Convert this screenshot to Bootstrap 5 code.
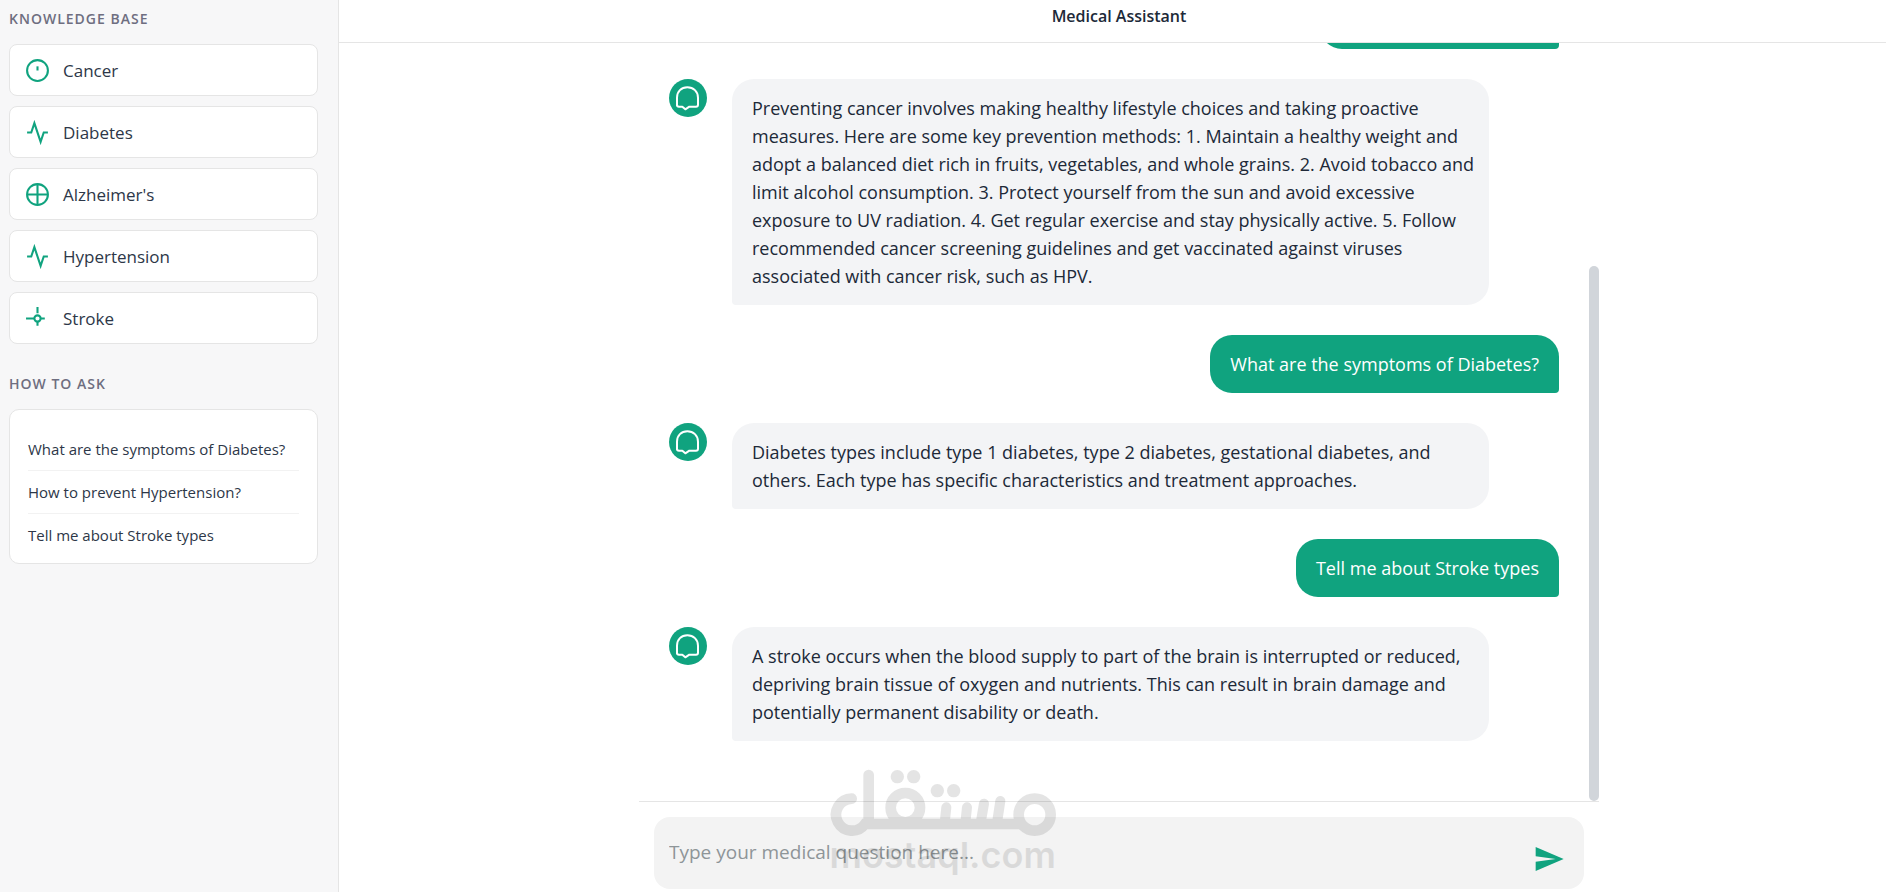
<!DOCTYPE html>
<html lang="en">
<head>
<meta charset="utf-8">
<meta name="viewport" content="width=device-width, initial-scale=1">
<title>Medical Assistant</title>
<link href="https://cdn.jsdelivr.net/npm/bootstrap@5.3.0/dist/css/bootstrap.min.css" rel="stylesheet">
<style>
  :root { --brand: #10a37f; --line: #e5e5e5; }
  body { font-family: "Open Sans", "Noto Sans", sans-serif; font-size: 18px; color: #202938; }
  .side-panel { width: 339px; background: #f7f7f8; border-right: 1px solid var(--line); padding: 9px 20px 0 9px; }
  .side-title { font-size: 14px; line-height: 20px; font-weight: 600; letter-spacing: 1px; color: #6e6e80; margin: 0 0 15px; text-transform: uppercase; }
  .topics { gap: 10px; }
  .topics + .side-title { margin-top: 30px; }
  .topic { height: 52px; border: 1px solid var(--line); border-radius: 8px; background: #fff; padding: 0 15px; gap: 13px; font-size: 17px; color: #2d3748; text-align: left; }
  .topic span { padding-top: 2px; }
  .topic svg { width: 25px; height: 25px; fill: none; stroke: var(--brand); stroke-width: 2; }
  .ask-card { border: 1px solid var(--line); border-radius: 10px; padding: 18px 18px 6px; }
  .ask-card a { display: block; height: 43px; padding-top: 10px; line-height: 22px; font-size: 15px; color: #2d3748; text-decoration: none; border-bottom: 1px solid #f2f2f2; white-space: nowrap; }
  .ask-card li:last-child a { border-bottom: 0; }
  .top-bar { height: 43px; border-bottom: 1px solid var(--line); padding: 0 0 8px 13px; }
  .top-bar h1 { font-size: 16px; font-weight: 600; }
  .chat-wrap { padding-left: 13px; }
  .chat-col { width: 100%; max-width: 960px; }
  .msg-list { padding: 0 30px 60px; gap: 30px; }
  .msg-list > * { flex-shrink: 0; }
  .avatar { width: 38px; height: 38px; margin-right: 25px; }
  .bubble { padding: 15px 20px; line-height: 28px; border-radius: 22px; }
  .bubble-bot { width: 85%; background: #f3f4f6; border-bottom-left-radius: 4px; padding-right: 6px; }
  .bubble-user { background: var(--brand); color: #fff; border-bottom-right-radius: 4px; min-width: 239px; min-height: 58px; }
  .bubble-fit { min-width: 0; }
  .scroll-track { width: 10px; }
  .scroll-thumb { background: #d1d5da; border-radius: 5px; }
  .composer { border-top: 1px solid var(--line); padding: 15px 15px 3px; }
  .composer-box { height: 72px; background: #f3f3f3; border-radius: 16px; padding: 0 19px 0 15px; }
  .composer-box input { border: 0; background: transparent; outline: 0; height: 72px; padding: 0 0 2px; font-size: 19px; }
  .composer-box input::placeholder { color: #8e9598; opacity: 1; }
  .send-btn { padding: 0; border: 0; background: transparent; line-height: 1; margin-bottom: 14px; }
  .brand-mark { bottom: 19px; width: 227px; opacity: .1; pointer-events: none; }
  .brand-mark span { font: 600 36px/36px Inter, sans-serif; color: #000; white-space: nowrap; }
  .brand-mark svg { display: block; }
</style>
</head>
<body>
<div class="d-flex vh-100 overflow-hidden position-relative">
  <aside class="side-panel flex-shrink-0">
    <h2 class="side-title">Knowledge Base</h2>
    <div class="d-grid topics">
      <button class="topic d-flex align-items-center" type="button"><svg viewBox="0 0 24 24"><circle cx="12" cy="12" r="10"/><path d="M12 8v4"/></svg><span>Cancer</span></button>
      <button class="topic d-flex align-items-center" type="button"><svg viewBox="0 0 24 24"><path d="M22 12h-4l-3 9L9 3l-3 9H2"/></svg><span>Diabetes</span></button>
      <button class="topic d-flex align-items-center" type="button"><svg viewBox="0 0 24 24"><circle cx="12" cy="12" r="10"/><path d="M12 2v20M2 12h20"/></svg><span>Alzheimer's</span></button>
      <button class="topic d-flex align-items-center" type="button"><svg viewBox="0 0 24 24"><path d="M22 12h-4l-3 9L9 3l-3 9H2"/></svg><span>Hypertension</span></button>
      <button class="topic d-flex align-items-center" type="button"><svg viewBox="0 0 24 24"><circle cx="12" cy="12" r="3"/><path d="M12 1v6M12 15v4M1 12h8M15 12h4"/></svg><span>Stroke</span></button>
    </div>
    <h2 class="side-title">How to Ask</h2>
    <ul class="ask-card bg-white list-unstyled mb-0">
      <li><a href="#">What are the symptoms of Diabetes?</a></li>
      <li><a href="#">How to prevent Hypertension?</a></li>
      <li><a href="#">Tell me about Stroke types</a></li>
    </ul>
  </aside>

  <main class="flex-grow-1 d-flex flex-column">
    <header class="top-bar d-flex align-items-center justify-content-center flex-shrink-0">
      <h1 class="mb-0">Medical Assistant</h1>
    </header>
    <div class="chat-wrap flex-grow-1 d-flex justify-content-center overflow-hidden">
      <div class="chat-col d-flex flex-column">
        <div class="flex-grow-1 d-flex overflow-hidden">
          <div class="msg-list flex-grow-1 d-flex flex-column justify-content-end">
            <div class="bubble bubble-user align-self-end"></div>
            <div class="d-flex align-items-start">
              <svg class="avatar flex-shrink-0" viewBox="87 233 114 114"><circle cx="144" cy="290" r="57" fill="#10a37f"/><path d="M111 313V289C111 270 124 258 142 258S174 270 174 289V310Q174 316 168 316H148L136 324L127 316H117Q111 316 111 310Z" fill="none" stroke="#fff" stroke-width="6" stroke-linejoin="round"/></svg>
              <div class="bubble bubble-bot">Preventing cancer involves making healthy lifestyle choices and taking proactive measures. Here are some key prevention methods: 1. Maintain a healthy weight and adopt a balanced diet rich in fruits, vegetables, and whole grains. 2. Avoid tobacco and limit alcohol consumption. 3. Protect yourself from the sun and avoid excessive exposure to UV radiation. 4. Get regular exercise and stay physically active. 5. Follow recommended cancer screening guidelines and get vaccinated against viruses associated with cancer risk, such as HPV.</div>
            </div>
            <div class="bubble bubble-user bubble-fit align-self-end">What are the symptoms of Diabetes?</div>
            <div class="d-flex align-items-start">
              <svg class="avatar flex-shrink-0" viewBox="87 233 114 114"><circle cx="144" cy="290" r="57" fill="#10a37f"/><path d="M111 313V289C111 270 124 258 142 258S174 270 174 289V310Q174 316 168 316H148L136 324L127 316H117Q111 316 111 310Z" fill="none" stroke="#fff" stroke-width="6" stroke-linejoin="round"/></svg>
              <div class="bubble bubble-bot">Diabetes types include type 1 diabetes, type 2 diabetes, gestational diabetes, and others. Each type has specific characteristics and treatment approaches.</div>
            </div>
            <div class="bubble bubble-user bubble-fit align-self-end">Tell me about Stroke types</div>
            <div class="d-flex align-items-start">
              <svg class="avatar flex-shrink-0" viewBox="87 233 114 114"><circle cx="144" cy="290" r="57" fill="#10a37f"/><path d="M111 313V289C111 270 124 258 142 258S174 270 174 289V310Q174 316 168 316H148L136 324L127 316H117Q111 316 111 310Z" fill="none" stroke="#fff" stroke-width="6" stroke-linejoin="round"/></svg>
              <div class="bubble bubble-bot">A stroke occurs when the blood supply to part of the brain is interrupted or reduced, depriving brain tissue of oxygen and nutrients. This can result in brain damage and potentially permanent disability or death.</div>
            </div>
          </div>
          <div class="scroll-track d-flex flex-column justify-content-end flex-shrink-0">
            <div class="scroll-thumb" style="height:70.6%"></div>
          </div>
        </div>
        <form class="composer flex-shrink-0">
          <div class="composer-box d-flex align-items-end">
            <input class="flex-grow-1" type="text" aria-label="Medical question" placeholder="Type your medical question here...">
            <button class="send-btn" type="button" aria-label="Send"><svg width="32" height="32" viewBox="0 0 24 24" fill="#10a37f"><path d="M2 21L23 12 2 3v7l15 2-15 2z"/></svg></button>
          </div>
        </form>
      </div>
    </div>
  </main>

  <div class="brand-mark position-absolute start-50 translate-middle-x">
    <svg width="227" height="68" viewBox="148 88 680 204" fill="none" stroke="#000" stroke-width="32" stroke-linecap="round">
      <path d="M214 177A48 48 0 1 0 254 253H722M265 106V240"/>
      <circle cx="375" cy="204" r="44"/><circle cx="763" cy="225" r="48"/>
      <path d="M498 203L493 250M560 203L555 250M611 192L601 250M660 184L650 250" stroke-width="30"/>
      <g fill="#000" stroke="none"><circle cx="351" cy="111" r="20"/><circle cx="400" cy="111" r="20"/><circle cx="471" cy="153" r="20"/><circle cx="520" cy="153" r="20"/></g>
    </svg>
    <span class="d-block">mostaql.com</span>
  </div>
</div>
<script src="https://cdn.jsdelivr.net/npm/bootstrap@5.3.0/dist/js/bootstrap.bundle.min.js"></script>
</body>
</html>
